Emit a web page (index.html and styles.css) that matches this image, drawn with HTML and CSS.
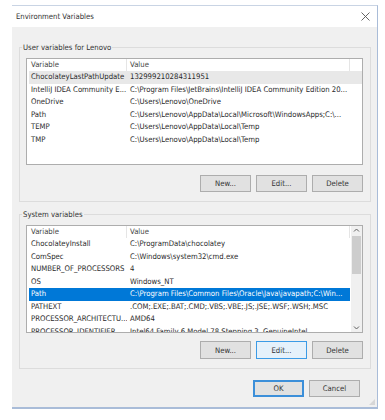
FILE: index.html
```html
<!DOCTYPE html>
<html>
<head>
<meta charset="utf-8">
<link rel="stylesheet" href="styles.css">
</head>
<body>
<div class="window">
  <div class="titlebar">
    <span class="title">Environment Variables</span>
    <svg class="close" width="9" height="9" viewBox="0 0 9 9"><path d="M0.5 0.5 L8.5 8.5 M8.5 0.5 L0.5 8.5" stroke="#555" stroke-width="0.9" fill="none"/></svg>
  </div>
  <div class="body">
    <fieldset class="group">
      <legend>User variables for Lenovo</legend>
      <div class="list list-user">
        <div class="row head"><span class="c1">Variable</span><span class="c2">Value</span><span class="c3"></span></div>
        <div class="row sel-gray"><span class="c1">ChocolateyLastPathUpdate</span><span class="c2">132999210284311951</span></div>
        <div class="row"><span class="c1">IntelliJ IDEA Community E...</span><span class="c2">C:\Program Files\JetBrains\IntelliJ IDEA Community Edition 20...</span></div>
        <div class="row"><span class="c1">OneDrive</span><span class="c2">C:\Users\Lenovo\OneDrive</span></div>
        <div class="row"><span class="c1">Path</span><span class="c2">C:\Users\Lenovo\AppData\Local\Microsoft\WindowsApps;C:\...</span></div>
        <div class="row"><span class="c1">TEMP</span><span class="c2">C:\Users\Lenovo\AppData\Local\Temp</span></div>
        <div class="row"><span class="c1">TMP</span><span class="c2">C:\Users\Lenovo\AppData\Local\Temp</span></div>
      </div>
      <div class="buttons">
        <button class="btn">New...</button>
        <button class="btn">Edit...</button>
        <button class="btn">Delete</button>
      </div>
    </fieldset>
    <fieldset class="group group-sys">
      <legend>System variables</legend>
      <div class="list list-sys">
        <div class="rows">
          <div class="row head"><span class="c1">Variable</span><span class="c2">Value</span></div>
          <div class="row"><span class="c1">ChocolateyInstall</span><span class="c2">C:\ProgramData\chocolatey</span></div>
          <div class="row"><span class="c1">ComSpec</span><span class="c2">C:\Windows\system32\cmd.exe</span></div>
          <div class="row"><span class="c1">NUMBER_OF_PROCESSORS</span><span class="c2">4</span></div>
          <div class="row"><span class="c1">OS</span><span class="c2">Windows_NT</span></div>
          <div class="row sel-blue"><span class="c1">Path</span><span class="c2">C:\Program Files\Common Files\Oracle\Java\javapath;C:\Win...</span></div>
          <div class="row"><span class="c1">PATHEXT</span><span class="c2">.COM;.EXE;.BAT;.CMD;.VBS;.VBE;.JS;.JSE;.WSF;.WSH;.MSC</span></div>
          <div class="row"><span class="c1">PROCESSOR_ARCHITECTU...</span><span class="c2">AMD64</span></div>
          <div class="row"><span class="c1">PROCESSOR_IDENTIFIER</span><span class="c2">Intel64 Family 6 Model 78 Stepping 3, GenuineIntel</span></div>
        </div>
        <div class="scrollbar">
          <svg class="arrow" width="11" height="9" viewBox="0 0 11 9"><path d="M3 5.5 L5.5 3 L8 5.5" stroke="#606060" stroke-width="1" fill="none"/></svg>
          <div class="track"><div class="thumb"></div></div>
          <svg class="arrow" width="11" height="9" viewBox="0 0 11 9"><path d="M3 3.5 L5.5 6 L8 3.5" stroke="#606060" stroke-width="1" fill="none"/></svg>
        </div>
      </div>
      <div class="buttons">
        <button class="btn">New...</button>
        <button class="btn btn-hot">Edit...</button>
        <button class="btn">Delete</button>
      </div>
    </fieldset>
    <div class="footer">
      <button class="btn btn-default">OK</button>
      <button class="btn">Cancel</button>
    </div>
    <div class="grip"></div>
  </div>
</div>
</body>
</html>
```

FILE: styles.css
```css
* { box-sizing: border-box; }
html, body { margin: 0; padding: 0; background: #fff; }
body {
  font-family: "DejaVu Sans Condensed", "DejaVu Sans", "Liberation Sans", sans-serif;
  font-size: 7.7px;
  color: #2a2a2a;
}
.window {
  margin: 5px 0 0 12px;
  width: 366px;
  border-top: 1px solid #c9d4e4;
  border-right: 1px solid #a9bcd8;
  border-bottom: 2px solid #a9bcd8;
  background: #f0f0f0;
}
.titlebar {
  height: 21px;
  background: #fff;
  display: flex;
  align-items: center;
  justify-content: space-between;
  padding: 0 7px 0 4px;
}
.title { color: #333; }
.close { display: block; }
.body {
  position: relative;
  padding: 15px 6px 10px 7px;
}
.group {
  margin: 0;
  border: 1px solid #dcdcdc;
  padding: 5px 7px 9px 6px;
  min-width: 0;
}
.group legend {
  padding: 0 1px;
  margin-left: -4px;
  line-height: 11px;
  color: #333;
}
.group-sys { margin-top: 7px; padding-top: 5px; }
.list {
  background: #fff;
  border: 1px solid #adadad;
  overflow: hidden;
}
.list-user { height: 107px; }
.list-sys { height: 108px; display: flex; }
.rows { flex: 1; min-width: 0; overflow: hidden; }
.row {
  display: flex;
  height: 12.5px;
  line-height: 12.5px;
  white-space: nowrap;
  margin-left: 2px;
}
.row span { overflow: hidden; }
.c1 { width: 98px; padding-left: 2px; flex: none; }
.c2 { width: 223px; padding-left: 3px; flex: none; }
.c3 { flex: 1; }
.head { margin-left: 0; height: 12px; line-height: 12px; color: #444; }
.head .c1 { width: 100px; padding-left: 4px; border-right: 1px solid #e5e5e5; }
.head .c2 { border-right: 1px solid #e5e5e5; }
.sel-gray { background: #e8e8e8; }
.sel-blue { background: #0078d7; color: #fff; }
.list-sys .row { width: 321px; }
.list-sys .head { width: 323px; }
.scrollbar {
  width: 11px;
  flex: none;
  display: flex;
  flex-direction: column;
  background: #f0f0f0;
}
.arrow { display: block; flex: none; }
.track { flex: 1; padding: 1px 1px; }
.thumb { height: 38px; background: #cdcdcd; }
.buttons {
  display: flex;
  justify-content: flex-end;
  gap: 5px;
  margin-top: 10px;
}
.group-sys .buttons { margin-top: 8px; }
.btn {
  width: 51px;
  height: 17px;
  padding: 0;
  font-family: inherit;
  font-size: 7.7px;
  color: #333;
  background: #e1e1e1;
  border: 1px solid #adadad;
}
.group-sys .btn { height: 18px; }
.btn-hot { background: #e5f1fb; border-color: #3c9be6; }
.btn-default { border: 1px solid #3c8fd9; box-shadow: inset 0 0 0 1px #3c8fd9; }
.footer {
  display: flex;
  justify-content: flex-end;
  gap: 5px;
  margin-top: 11px;
  padding-right: 11px;
}
.grip {
  position: absolute;
  right: 2px;
  bottom: 2px;
  width: 6px;
  height: 6px;
  background: radial-gradient(circle, #b8b8b8 0.6px, transparent 0.8px) 0 0 / 2px 2px;
  clip-path: polygon(100% 0, 100% 100%, 0 100%);
}
```
